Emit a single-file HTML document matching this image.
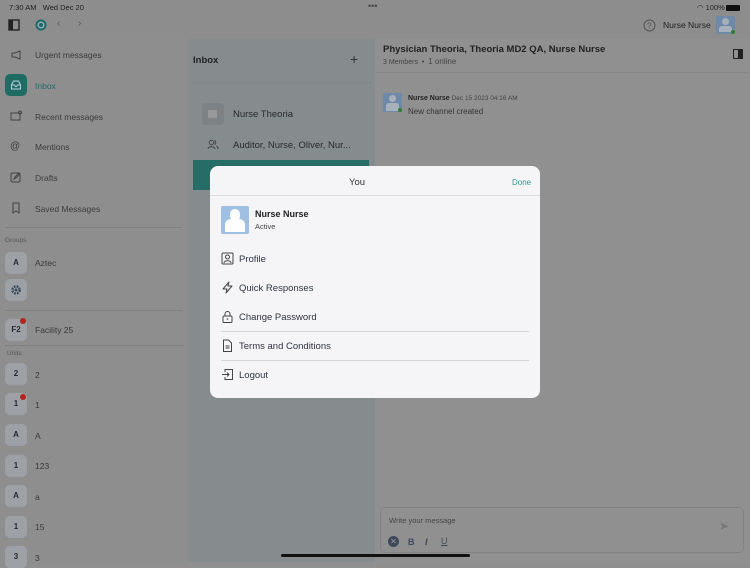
<!DOCTYPE html>
<html><head><style>
*{margin:0;padding:0;box-sizing:border-box}
body{width:750px;height:562px;overflow:hidden;font-family:"Liberation Sans",sans-serif;background:#8f8f8f;position:relative;color:#2a2a2a}
.abs{position:absolute}
.t{font-size:8.5px;color:#3a3a3a;position:absolute}
.nav{position:absolute;left:35px;font-size:8.5px;color:#3c3c3c}
.ic{position:absolute;left:10px;width:12px;height:12px}
.sq{position:absolute;left:5px;width:22px;height:22px;border-radius:5px;background:#9da1a6;font-size:8px;font-weight:bold;color:#2a2a2a;text-align:center;line-height:22px}
.lbl{position:absolute;left:35px;font-size:8.5px;color:#3a3a3a}
.dot{position:absolute;width:6px;height:6px;border-radius:3px;background:#b3261e}
.hr{position:absolute;height:1px;background:#7f8082}
.mi{position:absolute;left:239px;font-size:9.5px;color:#2f3442}
.mic{position:absolute;left:221px;width:13px;height:13px}
</style></head><body>
<div class="abs" style="left:0;top:0;width:750px;height:39px;background:#8d8d8d"></div>
<div class="t" style="left:9px;top:3px;font-size:7.5px;color:#222">7:30 AM&nbsp;&nbsp; Wed Dec 20</div>
<div class="t" style="left:368px;top:1px;font-size:9px;color:#444">•••</div>
<div class="t" style="left:697px;top:3px;font-size:7.5px;color:#222">&#x25E0; 100%</div>
<div class="abs" style="left:726px;top:5px;width:14px;height:6px;background:#111;border-radius:1px"></div>
<svg class="abs" style="left:8px;top:19px" width="12" height="12"><rect x="1" y="1" width="10" height="10" fill="none" stroke="#222" stroke-width="1.4"/><rect x="1" y="1" width="4" height="10" fill="#222"/></svg>
<svg class="abs" style="left:35px;top:19px" width="12" height="12"><circle cx="6" cy="6" r="5.5" fill="#1b6a64"/><circle cx="6" cy="6" r="2.8" fill="none" stroke="#9ab" stroke-width="1.5"/></svg>
<div class="t" style="left:57px;top:18px;font-size:10px;color:#555">&#8249;</div>
<div class="t" style="left:78px;top:18px;font-size:10px;color:#555">&#8250;</div>
<svg class="abs" style="left:643px;top:19px" width="13" height="13"><circle cx="6.5" cy="6.5" r="5.5" fill="none" stroke="#555" stroke-width="1"/><text x="4" y="9.5" font-size="8" fill="#555" font-family="Liberation Sans">?</text></svg>
<div class="t" style="left:663px;top:20px;font-size:8.5px;color:#222">Nurse Nurse</div>
<div class="abs" style="left:716px;top:16px;width:19px;height:18px;background:#6f8aa8;border-radius:2px"></div>
<div class="abs" style="left:722px;top:18px;width:7px;height:7px;border-radius:4px;background:#a8b0bb"></div>
<div class="abs" style="left:719px;top:26px;width:13px;height:6px;border-radius:3px 3px 0 0;background:#a8b0bb"></div>
<div class="abs" style="left:731px;top:30px;width:4px;height:4px;border-radius:2px;background:#2e7d32"></div>

<div class="abs" style="left:0;top:39px;width:188px;height:523px;background:#8e8e8e"></div>
<svg class="ic" style="top:49px" viewBox="0 0 12 12"><path d="M2 4h3l5-2v8L5 8H2z" fill="none" stroke="#444" stroke-width="1"/></svg>
<div class="nav" style="top:50px">Urgent messages</div>
<div class="abs" style="left:5px;top:74px;width:22px;height:22px;border-radius:5px;background:#1f6c65"></div>
<svg class="abs" style="left:10px;top:79px" width="12" height="12"><path d="M1.5 6l2-4h5l2 4v4h-9z M1.5 6h3l1 1.5h1l1-1.5h3" fill="none" stroke="#bcd" stroke-width="1"/></svg>
<div class="nav" style="top:81px;color:#1f6c65">Inbox</div>
<svg class="ic" style="top:110px" viewBox="0 0 12 12"><rect x="1" y="3" width="9" height="7" fill="none" stroke="#444"/><circle cx="10" cy="2.5" r="1.5" fill="none" stroke="#444"/></svg>
<div class="nav" style="top:112px">Recent messages</div>
<div class="nav" style="left:10px;top:141px;font-size:10px">@</div>
<div class="nav" style="top:142px">Mentions</div>
<svg class="ic" style="top:171px" viewBox="0 0 12 12"><rect x="1" y="2" width="9" height="9" rx="1.5" fill="none" stroke="#444"/><path d="M4 8l1-2 4-4 1 1-4 4z" fill="none" stroke="#444"/></svg>
<div class="nav" style="top:173px">Drafts</div>
<svg class="ic" style="top:202px" viewBox="0 0 12 12"><path d="M3 1h6v10l-3-2-3 2z" fill="none" stroke="#444"/></svg>
<div class="nav" style="top:204px">Saved Messages</div>
<div class="hr" style="left:5px;top:227px;width:177px"></div>
<div class="t" style="left:5px;top:237px;font-size:6.5px;color:#555">Groups</div>
<div class="sq" style="top:252px">A</div><div class="lbl" style="top:258px">Aztec</div>
<div class="sq" style="top:279px"></div>
<svg class="abs" style="left:10px;top:284px" width="12" height="12" viewBox="0 0 12 12"><circle cx="6" cy="6" r="3.6" fill="none" stroke="#3e4a5c" stroke-width="2.4" stroke-dasharray="1.9 1"/><circle cx="6" cy="6" r="1.5" fill="#3e4a5c"/></svg>
<div class="hr" style="left:5px;top:310px;width:177px"></div>
<div class="sq" style="top:319px">F2</div><div class="dot" style="left:20px;top:318px"></div><div class="lbl" style="top:325px">Facility 25</div>
<div class="hr" style="left:5px;top:345px;width:179px"></div>
<div class="t" style="left:7px;top:350px;font-size:6.5px;color:#555">Units</div>
<div class="sq" style="top:363px">2</div><div class="lbl" style="top:370px">2</div>
<div class="sq" style="top:393px">1</div><div class="dot" style="left:20px;top:394px"></div><div class="lbl" style="top:400px">1</div>
<div class="sq" style="top:424px">A</div><div class="lbl" style="top:431px">A</div>
<div class="sq" style="top:455px">1</div><div class="lbl" style="top:461px">123</div>
<div class="sq" style="top:485px">A</div><div class="lbl" style="top:492px">a</div>
<div class="sq" style="top:516px">1</div><div class="lbl" style="top:522px">15</div>
<div class="sq" style="top:546px">3</div><div class="lbl" style="top:553px">3</div>

<div class="abs" style="left:188px;top:39px;width:187px;height:523px;background:#868b8d"></div>
<div class="t" style="left:193px;top:55px;font-size:9.5px;font-weight:bold;color:#222">Inbox</div>
<div class="t" style="left:350px;top:51px;font-size:14px;color:#333">+</div>
<div class="hr" style="left:193px;top:82px;width:178px;background:#7f8486"></div>
<div class="abs" style="left:202px;top:103px;width:22px;height:22px;border-radius:4px;background:#7e8284"></div>
<div class="abs" style="left:208px;top:110px;width:9px;height:8px;background:#999;border-radius:1px"></div>
<div class="t" style="left:233px;top:109px;font-size:9.5px;color:#2a2a2a">Nurse Theoria</div>
<svg class="abs" style="left:207px;top:139px" width="12" height="11" viewBox="0 0 12 11"><circle cx="4.5" cy="3.5" r="2.2" fill="none" stroke="#444"/><path d="M1 10c0-3 7-3 7 0" fill="none" stroke="#444"/><path d="M7.5 1.5a2.2 2.2 0 010 4M9.5 7c1 .5 1.5 1.5 1.5 3" fill="none" stroke="#444"/></svg>
<div class="t" style="left:233px;top:140px;font-size:9.5px;color:#2a2a2a">Auditor, Nurse, Oliver, Nur...</div>
<div class="abs" style="left:193px;top:160px;width:176px;height:30px;background:#266d67"></div>

<div class="abs" style="left:375px;top:39px;width:375px;height:523px;background:#909090"></div>
<div class="t" style="left:383px;top:44px;font-size:9.5px;font-weight:bold;color:#222">Physician Theoria, Theoria MD2 QA, Nurse Nurse</div>
<div class="t" style="left:383px;top:57px;font-size:7px;color:#444">3 Members &nbsp;•&nbsp; <span style="font-size:8px">1 online</span></div>
<svg class="abs" style="left:733px;top:49px" width="10" height="10"><rect x="0.5" y="0.5" width="9" height="9" fill="none" stroke="#222"/><rect x="5" y="0.5" width="4.5" height="9" fill="#222"/></svg>
<div class="hr" style="left:375px;top:72px;width:375px;background:#868686"></div>
<div class="abs" style="left:383px;top:93px;width:19px;height:19px;background:#6f8aa8"></div>
<div class="abs" style="left:389px;top:95px;width:7px;height:7px;border-radius:4px;background:#a8b0bb"></div>
<div class="abs" style="left:386px;top:103px;width:13px;height:8px;border-radius:3px 3px 0 0;background:#a8b0bb"></div>
<div class="abs" style="left:398px;top:108px;width:4px;height:4px;border-radius:2px;background:#2e7d32"></div>
<div class="t" style="left:408px;top:95px;font-size:7px;font-weight:bold;color:#222">Nurse Nurse <span style="font-weight:normal;color:#444;font-size:6.5px">Dec 15 2023 04:16 AM</span></div>
<div class="t" style="left:408px;top:107px;font-size:8px;color:#333">New channel created</div>
<div class="abs" style="left:380px;top:507px;width:364px;height:46px;border:1px solid #828282;border-radius:5px"></div>
<div class="t" style="left:389px;top:516px;font-size:7.5px;color:#444">Write your message</div>
<div class="t" style="left:719px;top:519px;font-size:12px;color:#7a7a7a">&#10148;</div>
<div class="abs" style="left:388px;top:536px;width:11px;height:11px;border-radius:6px;background:#3e4a5c;color:#999;font-size:8px;line-height:11px;text-align:center">✕</div>
<div class="t" style="left:408px;top:537px;font-size:9px;font-weight:bold;color:#3e4a5c">B</div>
<div class="t" style="left:425px;top:537px;font-size:9px;font-style:italic;font-weight:bold;color:#3e4a5c">I</div>
<div class="t" style="left:441px;top:536px;font-size:9px;text-decoration:underline;color:#3e4a5c">U</div>
<div class="abs" style="left:281px;top:554px;width:189px;height:3px;border-radius:2px;background:#111"></div>

<div class="abs" style="left:210px;top:166px;width:330px;height:232px;background:#f5f5f7;border-radius:8px"></div>
<div class="t" style="left:349px;top:177px;font-size:9.5px;color:#333">You</div>
<div class="t" style="left:512px;top:178px;font-size:8px;color:#2a9b92">Done</div>
<div class="hr" style="left:210px;top:195px;width:330px;background:#dcdcdf"></div>
<div class="abs" style="left:221px;top:206px;width:28px;height:28px;background:#9fc0e0;border-radius:2px"></div>
<div class="abs" style="left:230px;top:209px;width:10px;height:12px;border-radius:5px;background:#fff"></div>
<div class="abs" style="left:225px;top:219px;width:20px;height:13px;border-radius:6px 6px 1px 1px;background:#fff"></div>
<div class="t" style="left:255px;top:209px;font-size:9px;font-weight:bold;color:#222">Nurse Nurse</div>
<div class="t" style="left:255px;top:222px;font-size:7.5px;color:#444">Active</div>
<svg class="mic" style="top:252px" viewBox="0 0 13 13"><rect x="1" y="1" width="11" height="11" rx="1" fill="none" stroke="#444" stroke-width="1"/><circle cx="6.5" cy="5" r="2" fill="none" stroke="#444"/><path d="M3 11c0-3 7-3 7 0" fill="none" stroke="#444"/></svg>
<div class="mi" style="top:254px">Profile</div>
<svg class="mic" style="top:281px" viewBox="0 0 13 13"><path d="M8 1L2 8h4l-1 4 6-7H7z" fill="none" stroke="#444" stroke-linejoin="round"/></svg>
<div class="mi" style="top:283px">Quick Responses</div>
<svg class="mic" style="top:310px" viewBox="0 0 13 13"><rect x="2" y="6" width="9" height="6.5" rx="1" fill="none" stroke="#444"/><path d="M4 6V4a2.5 2.5 0 015 0v2" fill="none" stroke="#444"/><circle cx="6.5" cy="9" r=".8" fill="#444"/></svg>
<div class="mi" style="top:312px">Change Password</div>
<div class="hr" style="left:221px;top:331px;width:308px;background:#d6d6da"></div>
<svg class="mic" style="top:339px" viewBox="0 0 13 13"><path d="M2.5 1h5l3 3v8.5h-8z" fill="none" stroke="#444"/><path d="M4.5 7h4M4.5 9h4" stroke="#444"/></svg>
<div class="mi" style="top:341px">Terms and Conditions</div>
<div class="hr" style="left:221px;top:360px;width:308px;background:#d6d6da"></div>
<svg class="mic" style="top:368px" viewBox="0 0 13 13"><path d="M4 4V1.5h7.5v10H4V9" fill="none" stroke="#444"/><path d="M1 6.5h7M6 4.5l2 2-2 2" fill="none" stroke="#444"/></svg>
<div class="mi" style="top:370px">Logout</div>
</body></html>
